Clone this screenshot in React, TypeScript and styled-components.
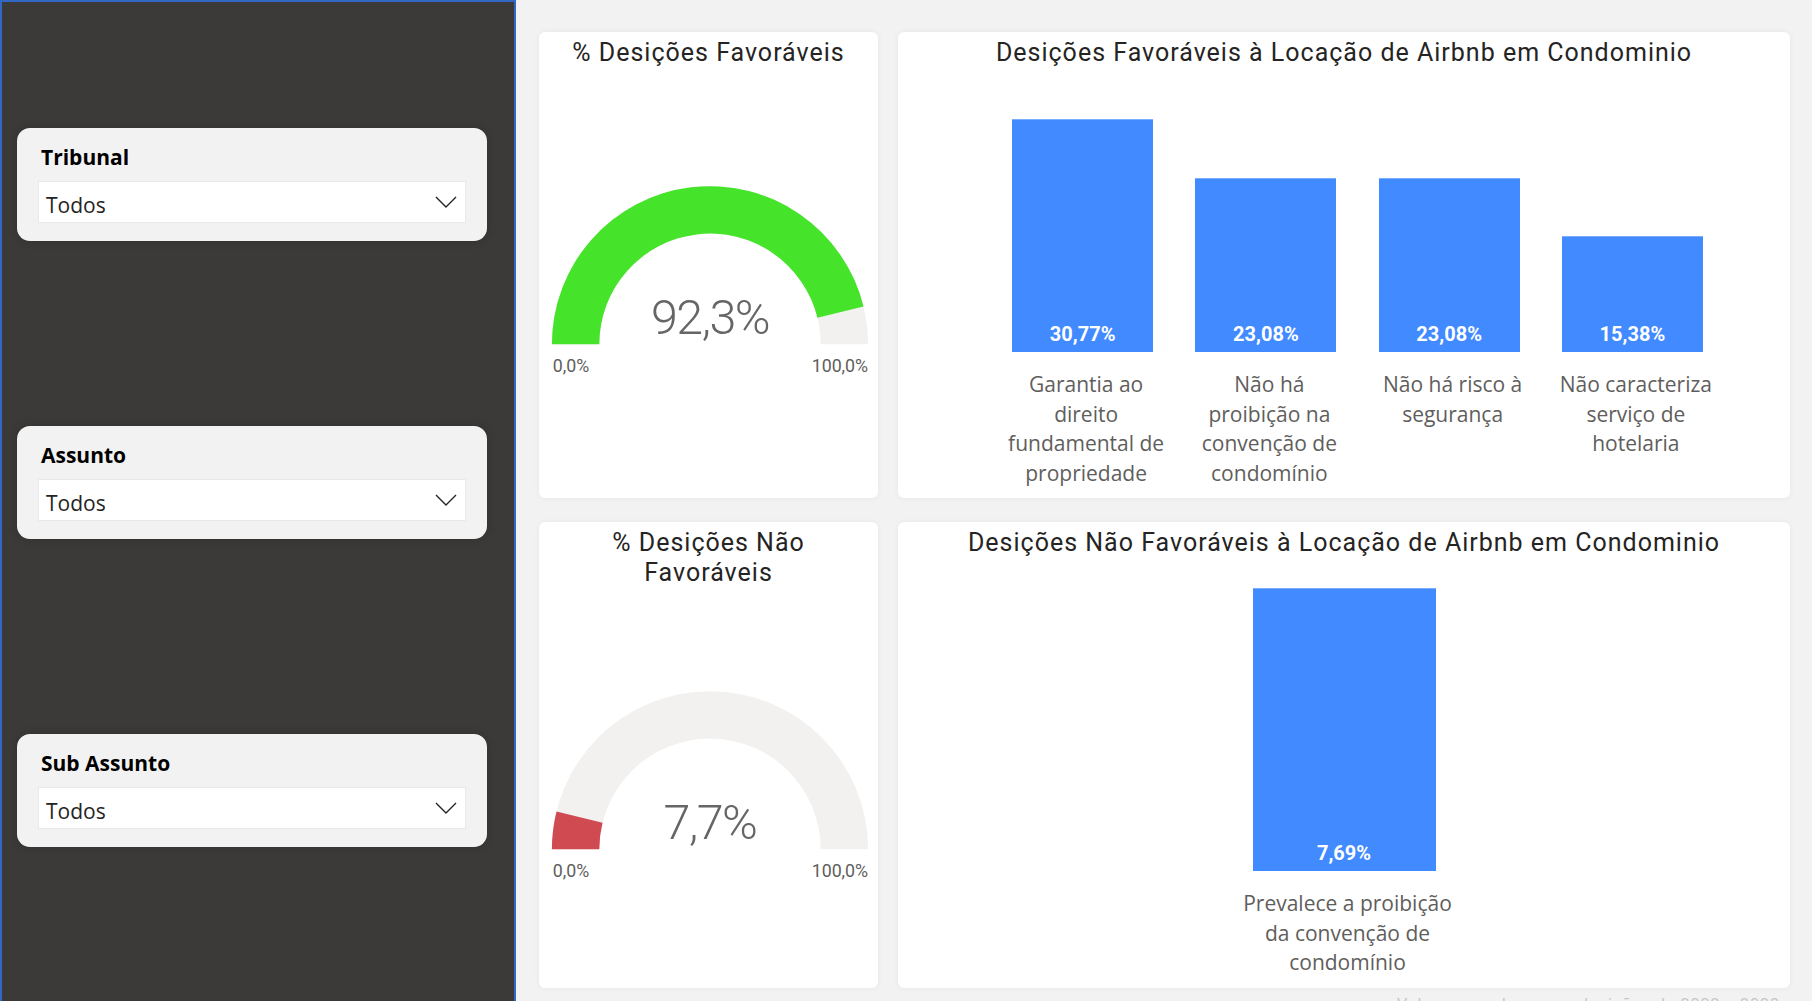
import styled, { createGlobalStyle } from 'styled-components';

const GlobalStyle = createGlobalStyle`
  html, body {
    margin: 0;
    padding: 0;
    background: #f2f2f2;
  }
  body {
    font-family: "Open Sans", "Liberation Sans", sans-serif;
  }
  #root {
    width: 1812px;
    height: 1001px;
    overflow: hidden;
  }
`;

const Page = styled.div`
  display: flex;
  width: 1812px;
  height: 1001px;
  overflow: hidden;
`;

const Sidebar = styled.aside`
  box-sizing: border-box;
  width: 516px;
  flex-shrink: 0;
  height: 1003px;
  background: #3b3a39;
  border: 2px solid #3267c4;
  padding: 126px 0 0 15px;
  display: flex;
  flex-direction: column;
`;

const Slicer = styled.div<{ $gap: number }>`
  box-sizing: border-box;
  width: 470px;
  margin-top: ${(p) => p.$gap}px;
  padding: 14px 21px 18px 21px;
  background: #f2f2f2;
  border-radius: 13px;
  box-shadow: 0 0 10px rgba(0, 0, 0, 0.18);
`;

const SlicerTitle = styled.div`
  font-family: "Open Sans", "Liberation Sans", sans-serif;
  font-weight: 700;
  font-size: 21px;
  line-height: 30px;
  color: #000;
  padding-left: 3px;
  margin-bottom: 9px;
`;

const Dropdown = styled.div`
  box-sizing: border-box;
  height: 42px;
  display: flex;
  align-items: center;
  justify-content: space-between;
  padding: 0 8px 0 7px;
  background: #fff;
  border: 1px solid #e9e9e9;
`;

const DropdownValue = styled.span`
  font-size: 21px;
  color: #252423;
  padding-top: 5px;
`;

const Main = styled.main`
  flex: 1;
  box-sizing: border-box;
  padding: 32px 22px 0 23px;
  background: #f2f2f2;
  display: flex;
  flex-direction: column;
`;

const Grid = styled.div`
  display: grid;
  grid-template-columns: 339px 1fr;
  grid-template-rows: 466px 466px;
  column-gap: 20px;
  row-gap: 24px;
`;

const Card = styled.section`
  background: #fff;
  border-radius: 6px;
  box-shadow: 0 0 6px rgba(0, 0, 0, 0.05);
  display: flex;
  flex-direction: column;
  overflow: hidden;
`;

const CardTitle = styled.h2`
  margin: 0;
  padding-top: 6px;
  font-family: Roboto, "Liberation Sans", sans-serif;
  font-weight: 400;
  font-size: 25px;
  line-height: 30px;
  letter-spacing: 1px;
  color: #252423;
  text-align: center;
  white-space: pre-line;
`;

const GaugeArea = styled.div`
  flex: 1;
  display: flex;
  align-items: center;
  justify-content: center;
  padding-left: 3px;
`;

const Plot = styled.div<{ $padLeft: number; $padRight: number }>`
  display: flex;
  justify-content: center;
  padding: 0 ${(p) => p.$padRight}px 0 ${(p) => p.$padLeft}px;
`;

const Column = styled.div<{ $width?: number }>`
  ${(p) => (p.$width ? `width: ${p.$width}px;` : 'flex: 1;')}
  display: flex;
  flex-direction: column;
  align-items: center;
`;

const BarSlot = styled.div<{ $height: number }>`
  height: ${(p) => p.$height}px;
  width: 100%;
  display: flex;
  align-items: flex-end;
  justify-content: center;
`;

const Bar = styled.div<{ $width: string }>`
  box-sizing: border-box;
  width: ${(p) => p.$width};
  background: #418aff;
  border-top: 1px solid #78adff;
  display: flex;
  flex-direction: column;
  justify-content: flex-end;
  align-items: center;
  padding-bottom: 7px;
`;

const BarValue = styled.span`
  font-family: Roboto, "Liberation Sans", sans-serif;
  font-weight: 700;
  font-size: 20px;
  line-height: 22px;
  color: #fff;
`;

const CatLabel = styled.div`
  margin-top: 18px;
  padding-left: 7px;
  font-family: "Open Sans", "Liberation Sans", sans-serif;
  font-size: 21px;
  line-height: 29.6px;
  color: #605e5c;
  text-align: center;
  white-space: nowrap;
`;

const Footer = styled.div`
  margin-top: 7px;
  padding-right: 10px;
  text-align: right;
  font-family: Roboto, "Liberation Sans", sans-serif;
  font-size: 16px;
  color: #c8c6c4;
  letter-spacing: 1px;
`;

const R = 160;
const r = 112;
const cx = 170;
const cy = 160;

function arcPath(f: number) {
  const t = Math.PI * f;
  const ox = cx - R * Math.cos(t);
  const oy = cy - R * Math.sin(t);
  const ix = cx - r * Math.cos(t);
  const iy = cy - r * Math.sin(t);
  return `M ${cx - R} ${cy} A ${R} ${R} 0 0 1 ${ox} ${oy} L ${ix} ${iy} A ${r} ${r} 0 0 0 ${cx - r} ${cy} Z`;
}

function Gauge({ value, color }: { value: number; color: string }) {
  const label = value.toFixed(1).replace('.', ',') + '%';
  return (
    <svg width="340" height="196" viewBox="0 0 340 196">
      <path d={arcPath(1)} fill="#f2f1f0" />
      <path d={arcPath(value / 100)} fill={color} />
      <text
        x={cx}
        y={150}
        textAnchor="middle"
        fontFamily="Roboto, sans-serif"
        fontWeight={300}
        fontSize={49}
        letterSpacing={-1.5}
        fill="#666666"
      >
        {label}
      </text>
      <text x={cx - R + 1} y={188} fontFamily="Roboto, sans-serif" fontSize={18} fill="#605e5c">
        0,0%
      </text>
      <text x={cx + R} y={188} textAnchor="end" fontFamily="Roboto, sans-serif" fontSize={18} fill="#605e5c">
        100,0%
      </text>
    </svg>
  );
}

function Chevron() {
  return (
    <svg width="22" height="12" viewBox="0 0 22 12">
      <polyline points="1,1 11,11 21,1" fill="none" stroke="#252423" strokeWidth="1.4" />
    </svg>
  );
}

type Item = { value: number; lines: string[] };

const favoraveis: Item[] = [
  { value: 30.77, lines: ['Garantia ao', 'direito', 'fundamental de', 'propriedade'] },
  { value: 23.08, lines: ['Não há', 'proibição na', 'convenção de', 'condomínio'] },
  { value: 23.08, lines: ['Não há risco à', 'segurança'] },
  { value: 15.38, lines: ['Não caracteriza', 'serviço de', 'hotelaria'] },
];

const naoFavoraveis: Item[] = [
  { value: 7.69, lines: ['Prevalece a proibição', 'da convenção de', 'condomínio'] },
];

const slicers = [
  { title: 'Tribunal', gap: 0 },
  { title: 'Assunto', gap: 185 },
  { title: 'Sub Assunto', gap: 195 },
];

const pct = (v: number) => v.toFixed(2).replace('.', ',') + '%';

export default function App() {
  return (
    <>
      <GlobalStyle />
      <Page>
        <Sidebar>
          {slicers.map((s) => (
            <Slicer key={s.title} $gap={s.gap}>
              <SlicerTitle>{s.title}</SlicerTitle>
              <Dropdown>
                <DropdownValue>Todos</DropdownValue>
                <Chevron />
              </Dropdown>
            </Slicer>
          ))}
        </Sidebar>
        <Main>
          <Grid>
            <Card>
              <CardTitle>% Desições Favoráveis</CardTitle>
              <GaugeArea>
                <Gauge value={92.3} color="#45e42a" />
              </GaugeArea>
            </Card>
            <Card>
              <CardTitle>Desições Favoráveis à Locação de Airbnb em Condominio</CardTitle>
              <Plot $padLeft={93} $padRight={66}>
                {favoraveis.map((d, i) => (
                  <Column key={i}>
                    <BarSlot $height={284}>
                      <Bar $width="77%" style={{ height: d.value * 7.56 }}>
                        <BarValue>{pct(d.value)}</BarValue>
                      </Bar>
                    </BarSlot>
                    <CatLabel>
                      {d.lines.map((l) => (
                        <div key={l}>{l}</div>
                      ))}
                    </CatLabel>
                  </Column>
                ))}
              </Plot>
            </Card>
            <Card>
              <CardTitle>{'% Desições Não\nFavoráveis'}</CardTitle>
              <GaugeArea>
                <Gauge value={7.7} color="#d04a52" />
              </GaugeArea>
            </Card>
            <Card>
              <CardTitle>Desições Não Favoráveis à Locação de Airbnb em Condominio</CardTitle>
              <Plot $padLeft={0} $padRight={0}>
                {naoFavoraveis.map((d, i) => (
                  <Column key={i} $width={260}>
                    <BarSlot $height={313}>
                      <Bar $width="183px" style={{ height: d.value * 36.8 }}>
                        <BarValue>{pct(d.value)}</BarValue>
                      </Bar>
                    </BarSlot>
                    <CatLabel>
                      {d.lines.map((l) => (
                        <div key={l}>{l}</div>
                      ))}
                    </CatLabel>
                  </Column>
                ))}
              </Plot>
            </Card>
          </Grid>
          <Footer>Valores com base nas decisões de 2022 a 2023</Footer>
        </Main>
      </Page>
    </>
  );
}
